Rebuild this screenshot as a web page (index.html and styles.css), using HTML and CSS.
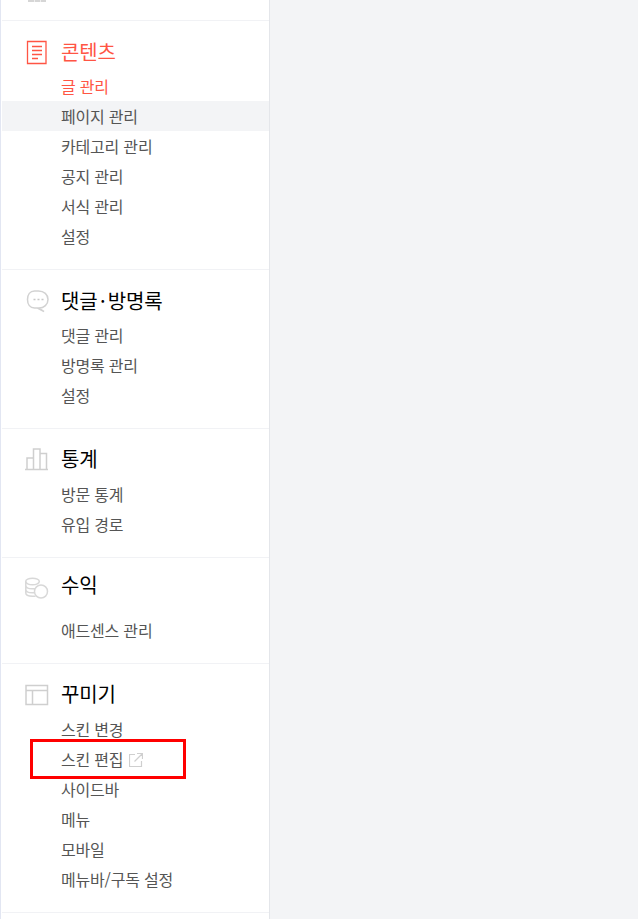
FILE: index.html
```html
<!DOCTYPE html>
<html lang="ko">
<head>
<meta charset="utf-8">
<title>메뉴</title>
<link rel="stylesheet" href="styles.css">
</head>
<body>
<aside class="sidebar">
  <div class="clip">
    <svg class="clip-icon" width="18" height="2" viewBox="0 0 18 2"><path d="M0 0h18v2H0z" fill="#d6d6d6"/><path d="M6 0h1v2H6zM12 0h1v2h-1z" fill="#efefef"/></svg>
  </div>
  <section class="group">
    <h2 class="title title-active">
      <svg class="icon" width="24" height="24" viewBox="0 0 24 24" fill="none" stroke="#ff5544"><path d="M2.500 1.500h18.500v22H2.500z" stroke-width="1.300"/><path d="M7 6.500h10M7 10.500h10M7 14.500h10M7 18.500h6" stroke-width="1.400"/></svg>
      콘텐츠
    </h2>
    <ul class="items">
      <li class="item item-active">글 관리</li>
      <li class="item item-hover">페이지 관리</li>
      <li class="item">카테고리 관리</li>
      <li class="item">공지 관리</li>
      <li class="item">서식 관리</li>
      <li class="item">설정</li>
    </ul>
  </section>
  <section class="group">
    <h2 class="title">
      <svg class="icon" width="24" height="24" viewBox="0 0 24 24" fill="none" stroke="#d2d2d2"><path d="M9.500 2h4c5.500 0 9.500 3.500 9.500 8.500s-4 8.500-9 8.500l5 3.500-6.500-3.500H9.500C5 19 2.500 15.500 2.500 10.500S5 2 9.500 2z" stroke-width="1.500"/><path d="M8.500 10.500h2M12.500 10.500h2M16.500 10.500h2" stroke-width="1.500" stroke="#c8c8c8"/></svg>
      댓글<span class="dot">·</span>방명록
    </h2>
    <ul class="items">
      <li class="item">댓글 관리</li>
      <li class="item">방명록 관리</li>
      <li class="item">설정</li>
    </ul>
  </section>
  <section class="group">
    <h2 class="title title-low">
      <svg class="icon" width="24" height="24" viewBox="0 0 24 24" fill="none" stroke="#cfcfcf" stroke-width="1.500"><path d="M0 22.500h23"/><path d="M2 22V11h6.500v11M8.500 22V2h6.500v20M15 22V6.500h6.500V22"/></svg>
      통계
    </h2>
    <ul class="items">
      <li class="item">방문 통계</li>
      <li class="item">유입 경로</li>
    </ul>
  </section>
  <section class="group">
    <h2 class="title title-tall">
      <svg class="icon" width="24" height="24" viewBox="0 0 24 24" fill="none" stroke="#d8d8d8" stroke-width="1.500"><ellipse cx="7.500" cy="8.500" rx="6.800" ry="3.300"/><path d="M.8 8.500v11.500c0 2 3 3.200 6.700 3.200h3M.8 12.500c0 2 3 3.300 6.700 3.300h3M.8 16.500c0 2 3 3.300 6.700 3.300h2"/><circle cx="16" cy="18.500" r="6.500" fill="#fff"/></svg>
      수익
    </h2>
    <ul class="items">
      <li class="item">애드센스 관리</li>
    </ul>
  </section>
  <section class="group">
    <h2 class="title title-low">
      <svg class="icon" width="24" height="24" viewBox="0 0 24 24" fill="none" stroke="#cfcfcf" stroke-width="1.500"><path d="M1 3.500h21.500v19H1zM1 8.500h21.500M7.500 8.500v14"/></svg>
      꾸미기
    </h2>
    <ul class="items">
      <li class="item">스킨 변경</li>
      <li class="item">스킨 편집
        <svg class="ext" width="14" height="14" viewBox="0 0 14 14" fill="none" stroke="#cfcfcf" stroke-width="1.200"><path d="M6 1.500H.5v12h12V8M8 .5h5.500V6M13.500.5 5.500 8.500"/></svg>
        <span class="marker"></span>
      </li>
      <li class="item">사이드바</li>
      <li class="item">메뉴</li>
      <li class="item">모바일</li>
      <li class="item">메뉴바/구독 설정</li>
    </ul>
  </section>
  <div class="group"></div>
</aside>
</body>
</html>
```
FILE: styles.css
```css
html, body {
  margin: 0;
  height: 100%;
  overflow: hidden;
}
body {
  background: #f3f4f6;
  font-family: "Noto Sans CJK KR", "Noto Sans", sans-serif;
}
.sidebar {
  box-sizing: border-box;
  width: 270px;
  height: 919px;
  overflow: hidden;
  padding-left: 1px;
  background: #fff;
  border-left: 1px solid #e2e6f2;
  border-right: 1px solid #e4e6ea;
}
.clip {
  height: 20px;
  padding-left: 26px;
}
.clip-icon {
  display: block;
}
.group {
  border-top: 1px solid #f1f2f5;
  padding-bottom: 18px;
}
.title {
  display: flex;
  align-items: center;
  box-sizing: border-box;
  height: 50px;
  margin: 0;
  padding: 12px 0 0 23px;
  font-size: 20px;
  font-weight: 400;
  line-height: 26px;
  letter-spacing: -0.2px;
  color: #000;
}
.title-low {
  padding-top: 10px;
}
.title-tall {
  height: 57px;
  padding-top: 0;
  padding-bottom: 3px;
}
.title-active {
  color: #ff5544;
}
.icon {
  flex: none;
  margin-right: 12px;
  overflow: visible;
}
.dot {
  margin: 0 2.500px;
}
.items {
  list-style: none;
  margin: 0;
  padding: 0;
}
.item {
  position: relative;
  height: 30px;
  padding-left: 59px;
  font-size: 16px;
  line-height: 30px;
  letter-spacing: -0.2px;
  color: #555;
}
.item-active {
  color: #ff5544;
}
.item-hover {
  background: #f3f4f6;
}
.ext {
  vertical-align: -1px;
  margin-left: 1px;
}
.marker {
  position: absolute;
  left: 28px;
  top: -5px;
  width: 150px;
  height: 34px;
  border: 3px solid #f00;
}
```
